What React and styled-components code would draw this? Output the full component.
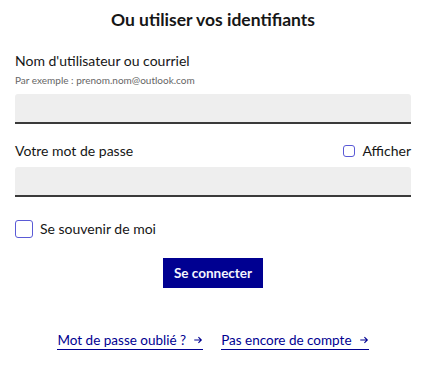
import React from "react";
import styled, { createGlobalStyle } from "styled-components";

const Global = createGlobalStyle`
  html, body { margin: 0; padding: 0; background: #fff; }
  body { font-family: Lato, "Noto Sans", Arial, sans-serif; color: #161616; }
  * { box-sizing: border-box; }
`;

const Page = styled.div`
  width: 425px;
  padding: 8px 14px 0 15px;
  display: flex;
  flex-direction: column;
`;

const Title = styled.h2`
  margin: 0;
  font-size: 17.5px;
  font-weight: 700;
  text-align: center;
  line-height: 24px;
  color: #161616;
`;

const Field = styled.div`
  display: flex;
  flex-direction: column;
  margin-top: ${(p) => p.$top}px;
`;

const LabelRow = styled.div`
  display: flex;
  justify-content: space-between;
  align-items: center;
`;

const Label = styled.label`
  font-size: 14px;
  line-height: 20px;
  color: #161616;
`;

const Hint = styled.span`
  font-size: 10px;
  line-height: 14px;
  color: #666;
  margin-top: 2px;
`;

const Input = styled.input`
  margin-top: ${(p) => p.$top}px;
  height: 30px;
  width: 100%;
  border: none;
  border-radius: 3px 3px 0 0;
  border-bottom: 2px solid #3a3a3a;
  background: #eeeeee;
  outline: none;
`;

const CheckLabel = styled.label`
  display: flex;
  align-items: center;
  gap: ${(p) => p.$gap}px;
  font-size: 14px;
  line-height: 20px;
  color: #161616;
  cursor: pointer;
`;

const Box = styled.span`
  display: inline-block;
  width: ${(p) => p.$size}px;
  height: ${(p) => p.$size}px;
  border: 1px solid #5a5ad6;
  border-radius: 3px;
  background: #fff;
`;

const Remember = styled.div`
  margin-top: 22px;
`;

const ButtonRow = styled.div`
  display: flex;
  justify-content: center;
  margin-top: 19px;
`;

const Button = styled.button`
  width: 100px;
  height: 30px;
  background: #000091;
  color: #f5f5fe;
  border: none;
  font-family: inherit;
  font-size: 13.5px;
  font-weight: 700;
  cursor: pointer;
`;

const Links = styled.div`
  display: flex;
  justify-content: center;
  gap: 18px;
  margin-top: 43px;
`;

const Link = styled.a`
  color: #000091;
  font-size: 13.5px;
  line-height: 18px;
  text-decoration: none;
  border-bottom: 1px solid #000091;
  display: inline-flex;
  align-items: center;
  gap: 7px;
`;

const Arrow = () => (
  <svg width="10" height="10" viewBox="0 0 24 24" fill="none" stroke="#000091" strokeWidth="2.6">
    <path d="M3 12h17M13 5l7 7-7 7" />
  </svg>
);

export default function App() {
  return (
    <>
      <Global />
      <Page>
        <Title>Ou utiliser vos identifiants</Title>
        <Field $top={19}>
          <Label>Nom d'utilisateur ou courriel</Label>
          <Hint>Par exemple : prenom.nom@outlook.com</Hint>
          <Input $top={7} type="text" />
        </Field>
        <Field $top={17}>
          <LabelRow>
            <Label>Votre mot de passe</Label>
            <CheckLabel $gap={7}>
              <Box $size={12} />
              Afficher
            </CheckLabel>
          </LabelRow>
          <Input $top={6} type="password" />
        </Field>
        <Remember>
          <CheckLabel $gap={7}>
            <Box $size={18} />
            Se souvenir de moi
          </CheckLabel>
        </Remember>
        <ButtonRow>
          <Button>Se connecter</Button>
        </ButtonRow>
        <Links>
          <Link href="#">Mot de passe oublié ? <Arrow /></Link>
          <Link href="#">Pas encore de compte <Arrow /></Link>
        </Links>
      </Page>
    </>
  );
}
